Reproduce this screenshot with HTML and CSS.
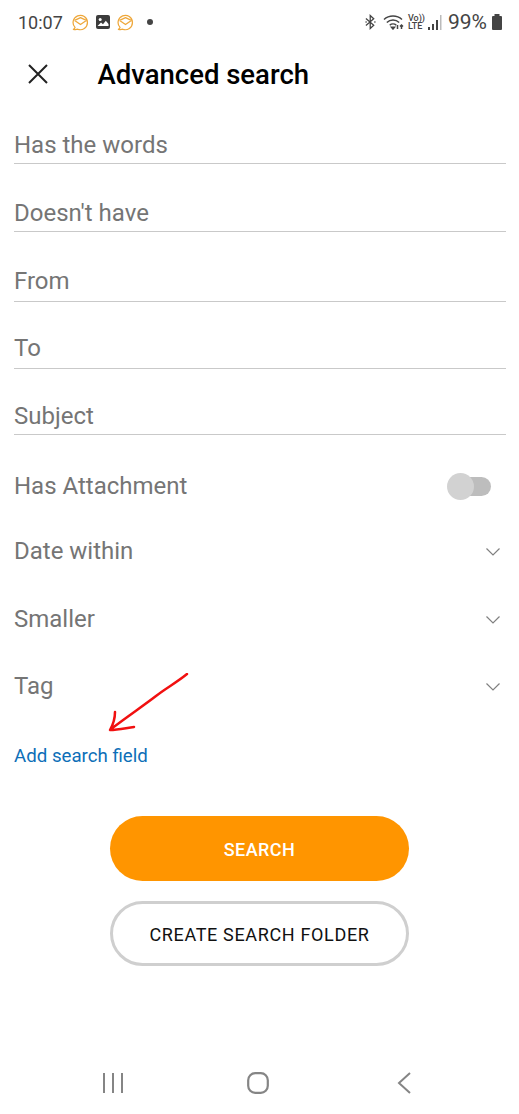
FILE: index.html
```html
<!DOCTYPE html>
<html lang="en">
<head>
<meta charset="utf-8">
<title>Advanced search</title>
<link rel="stylesheet" href="styles.css">
</head>
<body>
<div class="page">
  <div class="status">
    <div class="status-left">
      <span class="time">10:07</span>
      <svg class="ic-mail" viewBox="0 0 18 18"><path d="M3.200 14.200A7.600 7.600 0 1 1 6 16.100C4.800 16.500 3 16.600 1.400 16.200 2.300 15.700 2.900 15 3.200 14.200Z"/><path d="M2.800 6.800 9 11.200 15.200 6.800M2.800 6.800 9 3.800 15.200 6.800"/></svg>
      <svg class="ic-img" viewBox="0 0 14 14"><rect width="14" height="14" rx="2"/><circle cx="4.200" cy="4.400" r="1.500" class="ic-img-w"/><path class="ic-img-w" d="M1.500 11 5 7.500 7 9.300 9.800 5.800 12.500 9V11Z"/></svg>
      <svg class="ic-mail" viewBox="0 0 18 18"><path d="M3.200 14.200A7.600 7.600 0 1 1 6 16.100C4.800 16.500 3 16.600 1.400 16.200 2.300 15.700 2.900 15 3.200 14.200Z"/><path d="M2.800 6.800 9 11.200 15.200 6.800M2.800 6.800 9 3.800 15.200 6.800"/></svg>
      <span class="dot"></span>
    </div>
    <div class="status-right">
      <svg class="ic-bt" viewBox="0 0 12 16"><path d="M1 4.300 9.500 11.500 5.700 15V1L9.500 4.500 1 11.700"/><circle cx="1.200" cy="8" r=".9"/><circle cx="10.800" cy="8" r=".9"/></svg>
      <svg class="ic-wifi" viewBox="0 0 22 16"><path d="M1 5.500C6 .8 14 .8 19 5.500"/><path d="M3.800 8.500C7.300 5.200 12.700 5.200 16.200 8.500"/><path d="M6.700 11.300C8.500 9.700 11.500 9.700 13.300 11.300"/><path d="M10 15 8.500 13.200H11.500Z"/><path d="M14.500 11V15M18.500 15V11M17 12.500 18.500 11 20 12.500"/></svg>
      <span class="volte"><span>Vo))</span><span class="lte">LTE</span></span>
      <svg class="ic-signal" viewBox="0 0 14 15"><rect x="0" y="12" width="2" height="3"/><rect x="4" y="9" width="2" height="6"/><rect x="8" y="5" width="2" height="10"/><rect class="off" x="12" y="0" width="1.500" height="15"/></svg>
      <span class="pct">99%</span>
      <svg class="ic-batt" viewBox="0 0 12 16"><rect x="3.500" y="0" width="5" height="2"/><rect x="1" y="2" width="10" height="14" rx="1"/></svg>
    </div>
  </div>

  <header class="appbar">
    <svg class="ic-close" viewBox="0 0 20 20"><path d="M1 1 19 19M19 1 1 19"/></svg>
    <h1 class="title">Advanced search</h1>
  </header>

  <div class="fields">
    <div class="field"><span>Has the words</span></div>
    <div class="field"><span>Doesn't have</span></div>
    <div class="field field-raised"><span>From</span></div>
    <div class="field field-raised"><span>To</span></div>
    <div class="field"><span>Subject</span></div>
  </div>

  <div class="options">
    <div class="option option-toggle">
      <span>Has Attachment</span>
      <span class="toggle"><span class="knob"></span></span>
    </div>
    <div class="option"><span>Date within</span><svg class="chev" viewBox="0 0 14 8"><path d="M.5.500 7 7 13.500.500"/></svg></div>
    <div class="option"><span>Smaller</span><svg class="chev" viewBox="0 0 14 8"><path d="M.5.500 7 7 13.500.500"/></svg></div>
    <div class="option option-last"><span>Tag</span><svg class="chev" viewBox="0 0 14 8"><path d="M.5.500 7 7 13.500.500"/></svg></div>
  </div>

  <a class="add-link">Add search field</a>

  <div class="actions">
    <button class="btn btn-primary">SEARCH</button>
    <button class="btn btn-outline">CREATE SEARCH FOLDER</button>
  </div>

  <nav class="navbar">
    <svg class="ic-recent" viewBox="0 0 22 20"><path d="M2 0V20M11 0V20M20 0V20"/></svg>
    <svg class="ic-home" viewBox="0 0 22 22"><rect x="1.200" y="1.200" width="19.600" height="19.600" rx="7"/></svg>
    <svg class="ic-back" viewBox="0 0 14 22"><path d="M13 1 2 11 13 21"/></svg>
  </nav>

  <svg class="annotation" viewBox="0 0 90 66"><path d="M81 1C70 10 60 15 50 23 37 33 22 43 5 56M9 39C9 45 8 50 4 57 12 57 20 55 28 54"/></svg>
</div>
</body>
</html>
```
FILE: styles.css
```css
* { box-sizing: border-box; }
html, body { margin: 0; padding: 0; background: #fff; }
body { font-family: Roboto, "Liberation Sans", sans-serif; }
.page { position: relative; width: 519px; height: 1114px; display: flex; flex-direction: column; overflow: hidden; background: #fff; }

.status { height: 44px; padding: 0 16px 0 18px; display: flex; justify-content: space-between; align-items: center; color: #444; }
.status-left, .status-right { display: flex; align-items: center; }
.time { font-size: 18px; font-weight: 400; width: 54px; }
.ic-mail { width: 17px; height: 17px; margin-right: 6px; }
.ic-mail path { fill: none; stroke: #eea73a; stroke-width: 1.300; stroke-linejoin: round; }
.ic-img { width: 14px; height: 14px; margin: 0 7px 0 1px; fill: #3c3c3c; }
.ic-img-w { fill: #fff; }
.dot { width: 6px; height: 6px; border-radius: 50%; background: #444; margin-left: 7px; }
.ic-bt { width: 11px; height: 16px; margin-right: 7px; }
.ic-bt path { fill: none; stroke: #444; stroke-width: 1.400; }
.ic-bt circle { fill: #444; }
.ic-wifi { width: 22px; height: 16px; margin-right: 3px; }
.ic-wifi path { fill: none; stroke: #444; stroke-width: 1.500; }
.volte { display: flex; flex-direction: column; font-size: 9px; line-height: 8px; width: 15px; margin-right: 5px; font-weight: 500; }
.lte { font-size: 9px; line-height: 9px; }
.ic-signal { width: 14px; height: 15px; margin-right: 6px; fill: #444; }
.ic-signal .off { fill: #bbb; }
.pct { font-size: 21px; width: 43px; }
.ic-batt { width: 12px; height: 16px; fill: #444; }

.appbar { height: 60px; display: flex; align-items: center; padding-left: 28px; }
.ic-close { width: 20px; height: 20px; }
.ic-close path { fill: none; stroke: #222; stroke-width: 2; }
.title { margin: 2px 0 0 49.500px; font-size: 27.500px; font-weight: 500; color: #000; line-height: 30px; }

.fields { display: grid; grid-template-rows: 60px 68px 70px 67px 66px; padding: 0 13px 0 14px; }
.field { display: flex; align-items: flex-end; border-bottom: 1.500px solid #c9c9c9; padding-bottom: 4px; font-size: 24px; line-height: 28px; color: #757575; }
.field-raised { padding-bottom: 6px; }

.options { margin-top: 21px; padding: 0 19px 0 14px; font-size: 24px; color: #757575; }
.option { height: 68px; padding-top: 1px; display: flex; align-items: center; justify-content: space-between; }
.option-toggle { height: 60px; padding-top: 0; }
.option-last { padding-top: 0; }
.chev { width: 14px; height: 8px; margin-top: 2px; }
.chev path { fill: none; stroke: #808080; stroke-width: 1.200; }
.toggle { position: relative; width: 43px; height: 19px; border-radius: 10px; background: #bdbdbd; margin-right: 9px; display: block; }
.knob { position: absolute; left: -1px; top: -4px; width: 27px; height: 27px; border-radius: 50%; background: #d2d2d2; }

.add-link { margin: 22px 0 0 14px; height: 28px; font-size: 18.700px; line-height: 28px; color: #0d6fb8; }

.actions { margin-top: 46px; display: flex; flex-direction: column; align-items: center; gap: 20px; }
.btn { width: 299px; height: 65px; border-radius: 33px; font-family: inherit; font-size: 18px; letter-spacing: .45px; font-weight: 500; padding: 2px 0 0; }
.btn-primary { background: #ff9500; color: #fff; border: 0; }
.btn-outline { background: #fff; color: #111; border: 3px solid #cfcfcf; font-weight: 400; letter-spacing: .65px; }

.navbar { margin-top: auto; height: 62px; position: relative; display: flex; align-items: center; padding-left: 102px; }
.ic-recent { width: 22px; height: 20px; }
.ic-recent path { fill: none; stroke: #858585; stroke-width: 2; }
.ic-home { width: 22px; height: 22px; margin-left: 123px; }
.ic-home rect { fill: none; stroke: #858585; stroke-width: 2.200; }
.ic-back { width: 14px; height: 22px; margin-left: 128px; }
.ic-back path { fill: none; stroke: #858585; stroke-width: 2; }

.annotation { position: absolute; left: 106px; top: 673px; width: 90px; height: 66px; }
.annotation path { fill: none; stroke: #f11010; stroke-width: 2.500; stroke-linecap: round; stroke-linejoin: round; }
```
